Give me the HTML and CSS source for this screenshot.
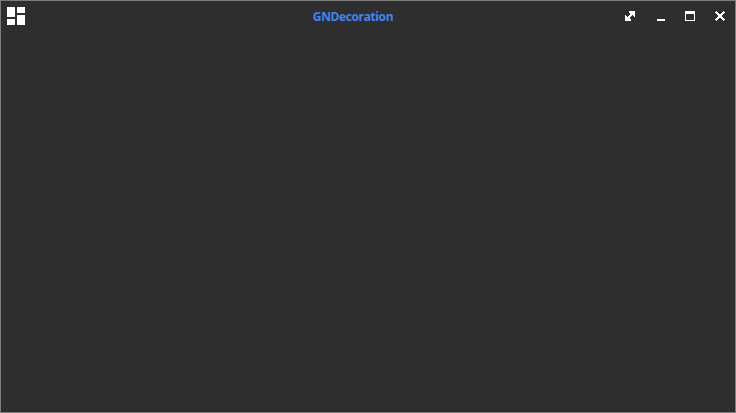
FILE: index.html
```html
<!DOCTYPE html>
<html lang="en">
<head>
<meta charset="utf-8">
<title>GNDecoration</title>
<link rel="stylesheet" href="styles.css">
</head>
<body>
<div class="window">
  <header class="titlebar">
    <svg class="app-icon" width="18" height="18" viewBox="0 0 18 18"><path d="M0 0h8v10H0zM10 0h8v6h-8zM0 12h8v6H0zM10 8h8v10h-8z"/></svg>
    <h1 class="title">GNDecoration</h1>
    <div class="controls">
      <svg width="10" height="10" viewBox="0 0 10 10"><path d="M4 0h6v6H9V5H8V4H7v1H6v1H5v2h1v2H0V4h1v1h1v1h1V5h1V4h1V2H4z"/></svg>
      <svg width="10" height="10" viewBox="0 0 10 10"><path d="M2 8h8v2H2z"/></svg>
      <svg width="10" height="10" viewBox="0 0 10 10"><path fill-rule="evenodd" d="M0 0h10v10H0zM1 3v6h8V3z"/></svg>
      <svg width="10" height="10" viewBox="0 0 10 10"><path d="M1 0h1v1h1v1h1v1h2V2h1V1h1V0h1v1h1v1H9v1H8v1H7v2h1v1h1v1h1v1H9v1H8V9H7V8H6V7H4v1H3v1H2v1H1V9H0V8h1V7h1V6h1V4H2V3H1V2H0V1h1z"/></svg>
    </div>
  </header>
  <main class="content"></main>
</div>
</body>
</html>
```
FILE: styles.css
```css
* { box-sizing: border-box; }
body { margin: 0; background: #2e2e2e; }
.window {
  display: flex;
  flex-direction: column;
  width: 100%;
  height: 100vh;
  border: 1px solid #7b7d7b;
  background: #2e2e2e;
}
.titlebar {
  display: flex;
  align-items: center;
  height: 30px;
  padding: 0 10px 0 6px;
}
svg { display: block; fill: #fff; }
.app-icon { flex: none; }
.title {
  flex: 1;
  margin: 0 0 0 56px;
  padding-top: 2px;
  text-align: center;
  font: 700 12px/30px "Open Sans", "Noto Sans", sans-serif;
  letter-spacing: -0.38px;
  color: #4285f4;
}
.controls { display: flex; gap: 20px; }
.content { flex: 1; }
```
